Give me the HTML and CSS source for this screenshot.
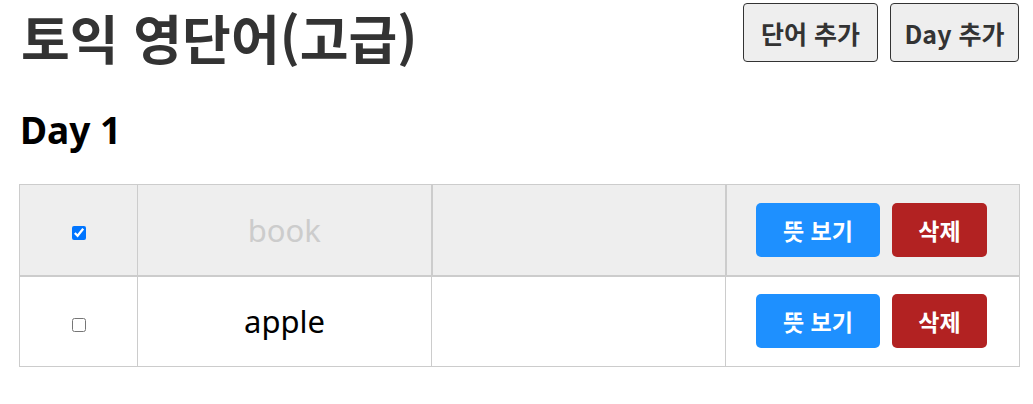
FILE: index.html
```html
<!DOCTYPE html>
<html lang="ko">

<head>
    <meta charset="UTF-8">
    <meta name="viewport" content="width=device-width, initial-scale=1.0">
    <title>토익 영단어(고급)</title>
    <link rel="stylesheet" href="styles.css">
</head>

<body>
    <div class="app">
        <div class="header">
            <h1>토익 영단어(고급)</h1>
            <div class="menu">
                <button class="link word">단어 추가</button>
                <button class="link day">Day 추가</button>
            </div>
        </div>
        <h2>Day 1</h2>
        <table>
            <tbody>
                <tr class="off">
                    <td class="chk"><input type="checkbox" checked></td>
                    <td>book</td>
                    <td></td>
                    <td class="btns">
                        <button class="show">뜻 보기</button>
                        <button class="del">삭제</button>
                    </td>
                </tr>
                <tr>
                    <td class="chk"><input type="checkbox"></td>
                    <td>apple</td>
                    <td></td>
                    <td class="btns">
                        <button class="show">뜻 보기</button>
                        <button class="del">삭제</button>
                    </td>
                </tr>
            </tbody>
        </table>
    </div>
</body>

</html>
```

FILE: styles.css
```css
* {
    margin: 0;
    padding: 0;
    box-sizing: border-box;
}

body {
    font-family: "Noto Sans", "Noto Sans CJK KR", sans-serif;
    background: #fff;
}

.app {
    width: 1001px;
    margin-left: 19px;
}

.header {
    display: flex;
    justify-content: space-between;
    align-items: flex-start;
    padding-top: 3px;
}

.header h1 {
    font-size: 53px;
    font-weight: bold;
    color: #333;
    line-height: 1;
    padding: 8px 0 0 2px;
    font-family: "Noto Sans CJK KR", sans-serif;
}

.menu {
    display: flex;
    gap: 12px;
    margin-right: 1px;
}

.link {
    height: 59px;
    padding: 0;
    font-family: "Noto Sans CJK KR", sans-serif;
    font-size: 25px;
    font-weight: bold;
    color: #333;
    background: #eee;
    border: 1px solid #333;
    border-radius: 4px;
}

.link.word {
    width: 135px;
}

.link.day {
    width: 129px;
}

h2 {
    font-size: 37px;
    font-weight: bold;
    color: #000;
    margin: 47px 0 36px 1px;
    line-height: 1;
}

table {
    width: 1001px;
    border-collapse: collapse;
}

td {
    height: 91px;
    width: 294px;
    border: 1px solid #ccc;
    text-align: center;
    font-size: 31px;
    color: #000;
}

td.chk {
    width: 118px;
}

td.chk input {
    width: 14px;
    height: 14px;
    vertical-align: middle;
}

.off td {
    background: #eee;
    color: #ccc;
    border-bottom-width: 2px;
}

.off td:nth-child(2),
.off td:nth-child(3) {
    border-right-width: 2px;
}

td.btns {
    text-align: right;
    padding-right: 32px;
}

.btns button {
    height: 54px;
    border: 0;
    border-radius: 5px;
    color: #fff;
    font-family: "Noto Sans CJK KR", sans-serif;
    font-size: 23px;
    font-weight: bold;
    vertical-align: middle;
}

.show {
    width: 124px;
    background: dodgerblue;
    margin-right: 4px;
}

.del {
    width: 95px;
    background: firebrick;
}
```
